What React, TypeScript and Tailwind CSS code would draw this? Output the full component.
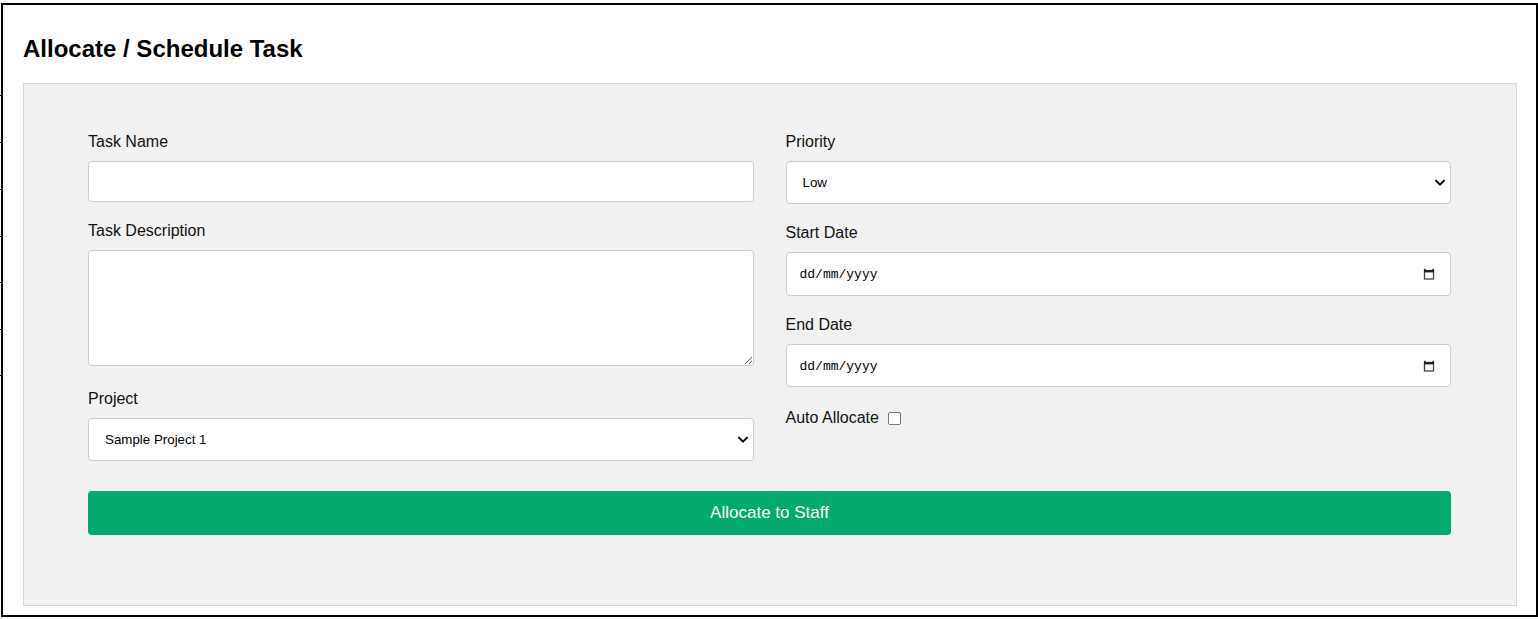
import React from "react";

function Chevron() {
  return (
    <svg
      className="pointer-events-none absolute right-[6px] top-1/2 -translate-y-1/2"
      width="10"
      height="7"
      viewBox="0 0 10 7"
      fill="none"
    >
      <path d="M1 1.2 L5 5.2 L9 1.2" stroke="#111" strokeWidth="2" strokeLinecap="square" />
    </svg>
  );
}

function CalendarIcon() {
  return (
    <svg
      className="pointer-events-none absolute right-[15px] top-1/2 -translate-y-1/2"
      width="12"
      height="12"
      viewBox="0 0 12 12"
      fill="none"
    >
      <rect x="1.5" y="2.5" width="9" height="8.5" stroke="#444" strokeWidth="1.3" fill="none" />
      <rect x="1" y="2" width="10" height="2.4" fill="#222" />
      <rect x="1" y="0.8" width="1.6" height="2" fill="#222" />
      <rect x="9.4" y="0.8" width="1.6" height="2" fill="#222" />
    </svg>
  );
}

function Label({ children, className = "" }: { children: React.ReactNode; className?: string }) {
  return (
    <label className={`block text-[16px] leading-[18px] text-[#111] ${className}`}>{children}</label>
  );
}

function Select({ value, className = "" }: { value: string; className?: string }) {
  return (
    <div className={`relative ${className}`}>
      <select
        defaultValue={value}
        className="block h-full w-full appearance-none rounded-[4px] border border-[#cccccc] bg-white pl-[16px] text-[13.333px] text-black outline-none"
      >
        <option>{value}</option>
      </select>
      <Chevron />
    </div>
  );
}

function DateField({ className = "" }: { className?: string }) {
  return (
    <div
      className={`relative flex items-center rounded-[4px] border border-[#cccccc] bg-white pl-[13px] pt-[2px] ${className}`}
    >
      <span className="font-['Liberation_Mono','DejaVu_Sans_Mono',monospace] text-[13px] text-black">
        dd/mm/yyyy
      </span>
      <CalendarIcon />
    </div>
  );
}

export default function App() {
  const ticks = [95, 142, 189, 236, 282, 329, 375];
  return (
    <div className="relative h-[619px] w-[1538px] overflow-hidden bg-white pl-[1px] pt-[3px] font-['Liberation_Sans',Arial,sans-serif]">
      {ticks.map((t) => (
        <div key={t} className="absolute left-0 h-[1px] w-[2px] bg-black" style={{ top: t }} />
      ))}
      <div className="h-[614px] w-[1537px] border-2 border-black pl-[20px]">
        <h2 className="mt-[30px] text-[24px] font-bold leading-[28px] text-black">
          Allocate / Schedule Task
        </h2>
        <div className="mt-[20px] h-[523px] w-[1494px] border border-[#d6d6d6] bg-[#f1f1f1] pl-[64px] pr-[65px] pt-[49px]">
          <div className="grid grid-cols-2 gap-x-[32px]">
            <div className="flex flex-col">
              <Label className="mb-[10px]">Task Name</Label>
              <input
                type="text"
                className="mb-[20px] block h-[41px] w-full rounded-[4px] border border-[#cccccc] bg-white px-[12px] outline-none"
              />
              <Label className="mb-[10px]">Task Description</Label>
              <textarea className="mb-[24px] block h-[116px] w-full resize-y rounded-[4px] border border-[#cccccc] bg-white px-[12px] outline-none" />
              <Label className="mb-[10px]">Project</Label>
              <Select value="Sample Project 1" className="h-[43px]" />
            </div>
            <div className="flex flex-col">
              <Label className="mb-[10px]">Priority</Label>
              <Select value="Low" className="mb-[20px] h-[43px]" />
              <Label className="mb-[10px]">Start Date</Label>
              <DateField className="mb-[20px] h-[44px]" />
              <Label className="mb-[10px]">End Date</Label>
              <DateField className="mb-[22px] h-[43px]" />
              <div className="flex items-center gap-[9px]">
                <Label>Auto Allocate</Label>
                <span className="block h-[13px] w-[13px] rounded-[2px] border border-[#767676] bg-white" />
              </div>
            </div>
          </div>
          <button className="mt-[30px] block h-[44px] w-full rounded-[4px] bg-[#04AA6D] text-[17px] text-white">
            Allocate to Staff
          </button>
        </div>
      </div>
    </div>
  );
}
